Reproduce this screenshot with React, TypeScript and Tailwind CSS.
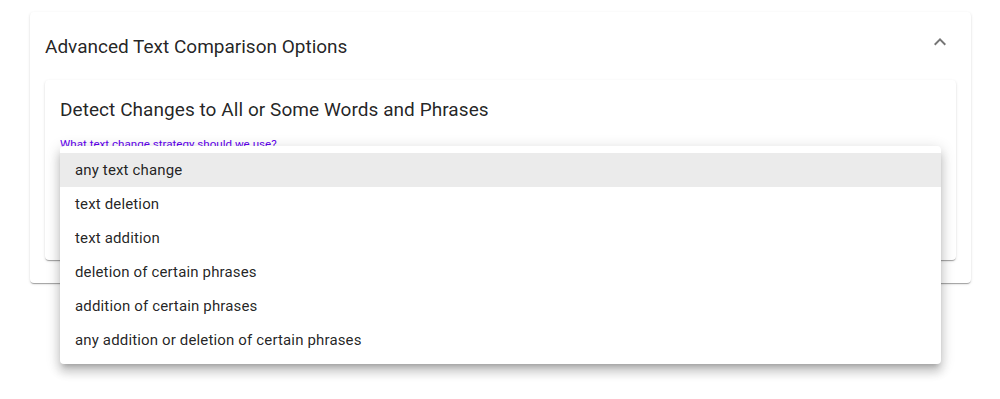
import React from 'react';

const options = [
  'any text change',
  'text deletion',
  'text addition',
  'deletion of certain phrases',
  'addition of certain phrases',
  'any addition or deletion of certain phrases',
];

const App = () => {
  return (
    <div className="relative w-[1000px] h-[399px] bg-white overflow-hidden font-['Roboto',sans-serif] text-[rgba(0,0,0,0.87)]">
      <div className="ml-[30px] mt-[12px] pt-[3px] w-[941px] bg-white rounded shadow-[0_2px_1px_-1px_rgba(0,0,0,0.2),0_1px_1px_0_rgba(0,0,0,0.14),0_1px_3px_0_rgba(0,0,0,0.12)]">
        <div className="flex items-center justify-between h-[64px] pl-[15px] pr-[19px]">
          <h3 className="text-[19px] leading-[24px]">Advanced Text Comparison Options</h3>
          <svg width="24" height="24" viewBox="0 0 24 24" className="text-[rgba(0,0,0,0.54)] -mt-[10px]">
            <path fill="currentColor" d="M7.41 15.41 12 10.83l4.59 4.58L18 14l-6-6-6 6z" />
          </svg>
        </div>
        <div className="px-[15px] pt-[1px] pb-[23px]">
          <div className="h-[180px] bg-white rounded px-[15px] pt-[14px] shadow-[0_2px_1px_-1px_rgba(0,0,0,0.2),0_1px_1px_0_rgba(0,0,0,0.14),0_1px_3px_0_rgba(0,0,0,0.12)]">
            <h4 className="text-[19px] leading-[32px] tracking-[0.06px]">Detect Changes to All or Some Words and Phrases</h4>
            <label className="block mt-[11px] text-[11.6px] leading-[14px] text-[#6200ee]">
              What text change strategy should we use?
            </label>
            {/* select field, hidden under the open menu */}
            <div className="mt-[6px] h-[40px] border-b-2 border-[#6200ee]" />
          </div>
        </div>
      </div>

      <ul className="absolute left-[60px] top-[146px] w-[881px] bg-white rounded py-[7px] shadow-[0_5px_5px_-3px_rgba(0,0,0,0.2),0_8px_10px_1px_rgba(0,0,0,0.14),0_3px_14px_2px_rgba(0,0,0,0.12)]">
        {options.map((opt, i) => (
          <li
            key={opt}
            className={`h-[34px] flex items-center px-[15px] text-[15px] tracking-[0.15px] ${i === 0 ? 'bg-[#ebebeb]' : ''}`}
          >
            {opt}
          </li>
        ))}
      </ul>
    </div>
  );
};

export default App;
